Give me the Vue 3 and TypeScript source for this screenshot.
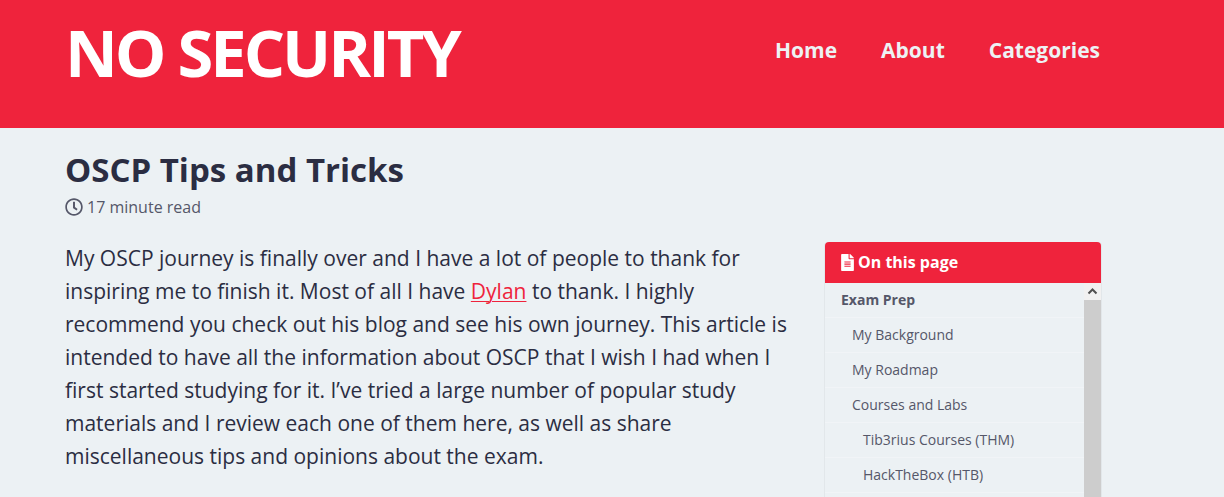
<script setup lang="ts">
interface NavLink {
  label: string
  href: string
}

interface TocEntry {
  label: string
  href: string
  level: 1 | 2 | 3
}

const navLinks: NavLink[] = [
  { label: 'Home', href: '#home' },
  { label: 'About', href: '#about' },
  { label: 'Categories', href: '#categories' },
]

const toc: TocEntry[] = [
  { label: 'Exam Prep', href: '#exam-prep', level: 1 },
  { label: 'My Background', href: '#my-background', level: 2 },
  { label: 'My Roadmap', href: '#my-roadmap', level: 2 },
  { label: 'Courses and Labs', href: '#courses-and-labs', level: 2 },
  { label: 'Tib3rius Courses (THM)', href: '#tib3rius', level: 3 },
  { label: 'HackTheBox (HTB)', href: '#hackthebox', level: 3 },
]
</script>

<template>
  <div class="page">
    <header class="masthead">
      <a class="brand" href="#home">NO SECURITY</a>
      <nav class="nav" aria-label="Main">
        <a v-for="link in navLinks" :key="link.href" :href="link.href">{{ link.label }}</a>
      </nav>
    </header>

    <main class="main">
      <h1 class="title">OSCP Tips and Tricks</h1>
      <p class="meta">
        <svg class="clock" viewBox="0 0 512 512" aria-hidden="true">
          <path
            d="M256 8C119 8 8 119 8 256s111 248 248 248 248-111 248-248S393 8 256 8zm0 448c-110.500 0-200-89.500-200-200S145.500 56 256 56s200 89.500 200 200-89.500 200-200 200zm61.800-104.400l-84.900-61.700c-3.100-2.300-4.900-5.900-4.900-9.700V116c0-6.600 5.400-12 12-12h32c6.600 0 12 5.400 12 12v141.700l66.800 48.600c5.400 3.900 6.500 11.400 2.600 16.800L334.600 349c-3.900 5.300-11.400 6.500-16.800 2.600z"
          />
        </svg>
        17 minute read
      </p>

      <div class="columns">
        <article class="article">
          <p>
            My OSCP journey is finally over and I have a lot of people to thank for inspiring me to
            finish it. Most of all I have <a href="#dylan">Dylan</a> to thank. I highly recommend
            you check out his blog and see his own journey. This article is intended to have all the
            information about OSCP that I wish I had when I first started studying for it. I’ve
            tried a large number of popular study materials and I review each one of them here, as
            well as share miscellaneous tips and opinions about the exam.
          </p>
        </article>

        <aside class="toc">
          <h2 class="toc-title">
            <svg class="file" viewBox="0 0 384 512" aria-hidden="true">
              <path
                d="M224 136V0H24C10.700 0 0 10.700 0 24v464c0 13.300 10.700 24 24 24h336c13.300 0 24-10.700 24-24V160H248c-13.200 0-24-10.800-24-24zm64 236c0 6.600-5.400 12-12 12H108c-6.600 0-12-5.400-12-12v-8c0-6.600 5.400-12 12-12h168c6.600 0 12 5.400 12 12v8zm0-64c0 6.600-5.400 12-12 12H108c-6.600 0-12-5.400-12-12v-8c0-6.600 5.400-12 12-12h168c6.600 0 12 5.400 12 12v8zm0-72v8c0 6.600-5.400 12-12 12H108c-6.600 0-12-5.400-12-12v-8c0-6.600 5.400-12 12-12h168c6.600 0 12 5.400 12 12zm96-114.100v6.100H256V0h6.100c6.400 0 12.500 2.500 17 7l97.900 98c4.500 4.500 7 10.600 7 16.900z"
              />
            </svg>
            On this page
          </h2>
          <div class="toc-body">
            <ul class="toc-list">
              <li v-for="entry in toc" :key="entry.href">
                <a :href="entry.href" :class="`level-${entry.level}`">{{ entry.label }}</a>
              </li>
            </ul>
            <div class="scrollbar">
              <button class="scroll-up" type="button" aria-label="Scroll up">
                <svg viewBox="0 0 17 17" aria-hidden="true">
                  <path d="M4.500 10.500 8.500 6.500 12.500 10.500" />
                </svg>
              </button>
              <div class="thumb"></div>
            </div>
          </div>
        </aside>
      </div>
    </main>
  </div>
</template>

<style>
body {
  margin: 0;
  background: #ecf1f4;
}
</style>

<style scoped>
.page {
  display: flex;
  flex-direction: column;
  height: 100vh;
  overflow: hidden;
  background: #ecf1f4;
  color: #2b2d42;
  font-family: 'Open Sans', sans-serif;
}

.masthead {
  display: flex;
  flex: none;
  justify-content: space-between;
  box-sizing: border-box;
  height: 128px;
  padding: 0 124px 0 65px;
  background: #ef233c;
}

.brand {
  color: #fff;
  font-size: 65px;
  font-weight: 700;
  line-height: 104px;
  letter-spacing: -3px;
  text-decoration: none;
  white-space: nowrap;
}

.nav {
  display: flex;
  gap: 44px;
}

.nav a {
  color: #edf2f4;
  font-size: 21px;
  font-weight: 700;
  line-height: 100px;
  text-decoration: none;
}

.main {
  display: flex;
  flex: 1;
  flex-direction: column;
  min-height: 0;
  padding: 20px 122px 0 65px;
}

.title {
  margin: 0;
  font-size: 33px;
  font-weight: 700;
  line-height: 44px;
}

.meta {
  display: flex;
  gap: 4px;
  align-items: center;
  margin: 3px 0 23px;
  color: #555769;
  font-size: 16px;
  line-height: 24px;
}

.clock {
  width: 18px;
  height: 18px;
  fill: currentColor;
}

.columns {
  display: flex;
  flex: 1;
  gap: 36px;
  min-height: 0;
}

.article {
  flex: 1;
  font-size: 21px;
  line-height: 33px;
}

.article p {
  margin: 0;
}

.article a {
  color: #ef233c;
  text-decoration-thickness: 1px;
  text-underline-offset: 2px;
}

.toc {
  display: flex;
  flex: 0 0 276px;
  flex-direction: column;
  border: 1px solid #e2e7ea;
  border-width: 0 1px;
  border-radius: 4px 4px 0 0;
}

.toc-title {
  display: flex;
  flex: none;
  gap: 4px;
  align-items: center;
  margin: 0;
  padding: 0 16px;
  border-radius: 4px 4px 0 0;
  background: #ef233c;
  color: #fff;
  font-size: 16px;
  font-weight: 700;
  line-height: 41px;
}

.file {
  width: 13px;
  height: 17px;
  fill: currentColor;
}

.toc-body {
  display: flex;
  flex: 1;
  min-height: 0;
}

.toc-list {
  flex: 1;
  margin: 0;
  padding: 0;
  overflow: hidden;
  list-style: none;
}

.toc-list a {
  display: block;
  border-bottom: 1px solid #f1f4f7;
  color: #555769;
  font-size: 14px;
  line-height: 34px;
  text-decoration: none;
}

.toc-list .level-1 {
  padding-left: 16px;
  font-weight: 700;
}

.toc-list .level-2 {
  padding-left: 27px;
}

.toc-list .level-3 {
  padding-left: 38px;
}

.scrollbar {
  display: flex;
  flex: 0 0 17px;
  flex-direction: column;
}

.scroll-up {
  flex: 0 0 17px;
  padding: 0;
  border: 0;
  background: #f1f1f1;
}

.scroll-up svg {
  display: block;
  width: 17px;
  height: 17px;
  fill: none;
  stroke: #505050;
  stroke-width: 2;
}

.thumb {
  flex: 1;
  background: #cdcdcd;
}
</style>
